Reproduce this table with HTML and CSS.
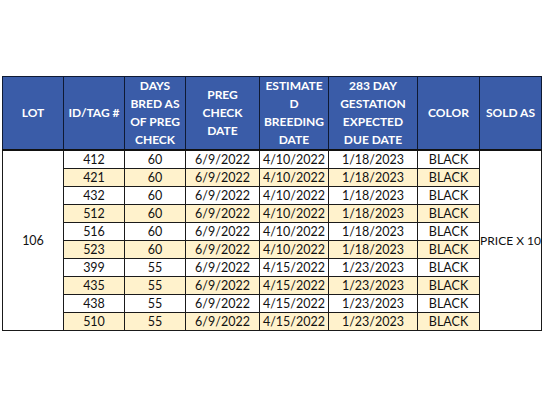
FILE: index.html
```html
<!DOCTYPE html>
<html>
<head>
<meta charset="utf-8">
<link rel="stylesheet" href="styles.css">
</head>
<body>
<div class="page">
<table class="sheet">
  <colgroup>
    <col class="c-lot"><col class="c-id"><col class="c-days"><col class="c-preg">
    <col class="c-est"><col class="c-due"><col class="c-color"><col class="c-sold">
  </colgroup>
  <thead>
    <tr class="head">
      <th>LOT</th>
      <th>ID/TAG #</th>
      <th>DAYS<br>BRED AS<br>OF PREG<br>CHECK</th>
      <th>PREG<br>CHECK<br>DATE</th>
      <th>ESTIMATE<br>D<br>BREEDING<br>DATE</th>
      <th>283 DAY<br>GESTATION<br>EXPECTED<br>DUE DATE</th>
      <th>COLOR</th>
      <th>SOLD AS</th>
    </tr>
  </thead>
  <tbody>
    <tr><td class="lot" rowspan="10">106</td><td>412</td><td>60</td><td>6/9/2022</td><td>4/10/2022</td><td>1/18/2023</td><td>BLACK</td><td class="sold" rowspan="10">PRICE X 10</td></tr>
    <tr class="alt"><td>421</td><td>60</td><td>6/9/2022</td><td>4/10/2022</td><td>1/18/2023</td><td>BLACK</td></tr>
    <tr><td>432</td><td>60</td><td>6/9/2022</td><td>4/10/2022</td><td>1/18/2023</td><td>BLACK</td></tr>
    <tr class="alt"><td>512</td><td>60</td><td>6/9/2022</td><td>4/10/2022</td><td>1/18/2023</td><td>BLACK</td></tr>
    <tr><td>516</td><td>60</td><td>6/9/2022</td><td>4/10/2022</td><td>1/18/2023</td><td>BLACK</td></tr>
    <tr class="alt"><td>523</td><td>60</td><td>6/9/2022</td><td>4/10/2022</td><td>1/18/2023</td><td>BLACK</td></tr>
    <tr><td>399</td><td>55</td><td>6/9/2022</td><td>4/15/2022</td><td>1/23/2023</td><td>BLACK</td></tr>
    <tr class="alt"><td>435</td><td>55</td><td>6/9/2022</td><td>4/15/2022</td><td>1/23/2023</td><td>BLACK</td></tr>
    <tr><td>438</td><td>55</td><td>6/9/2022</td><td>4/15/2022</td><td>1/23/2023</td><td>BLACK</td></tr>
    <tr class="alt"><td>510</td><td>55</td><td>6/9/2022</td><td>4/15/2022</td><td>1/23/2023</td><td>BLACK</td></tr>
  </tbody>
</table>
</div>
</body>
</html>
```

FILE: styles.css
```css
html, body {
  margin: 0;
  padding: 0;
  background: #ffffff;
}
.page {
  padding: 76px 0 0 2px;
}
.sheet {
  border-collapse: collapse;
  table-layout: fixed;
  width: 539px;
  font-family: Lato, "Open Sans", sans-serif;
  color: #111;
}
.c-lot { width: 61px; }
.c-id { width: 61px; }
.c-days { width: 61px; }
.c-preg { width: 74px; }
.c-est { width: 69px; }
.c-due { width: 89px; }
.c-color { width: 62px; }
.c-sold { width: 62px; }

.sheet th, .sheet td {
  border: 1px solid #1a1a1a;
  padding: 0;
  text-align: center;
  white-space: nowrap;
}
.head {
  height: 73px;
}
.head th {
  background: #3a5ca8;
  color: #ffffff;
  font-weight: 700;
  font-size: 12px;
  line-height: 18px;
  vertical-align: middle;
  border-color: #0f1a33;
  border-bottom: 2px solid #111;
}
.sheet tbody tr {
  height: 18px;
}
.sheet td {
  font-size: 12.5px;
  line-height: 17px;
  vertical-align: middle;
  background: #ffffff;
}
.sheet tr.alt td {
  background: #fff2cc;
}
.sheet td.lot, .sheet td.sold {
  background: #ffffff;
}
.sheet td.sold {
  font-size: 12px;
}
```
